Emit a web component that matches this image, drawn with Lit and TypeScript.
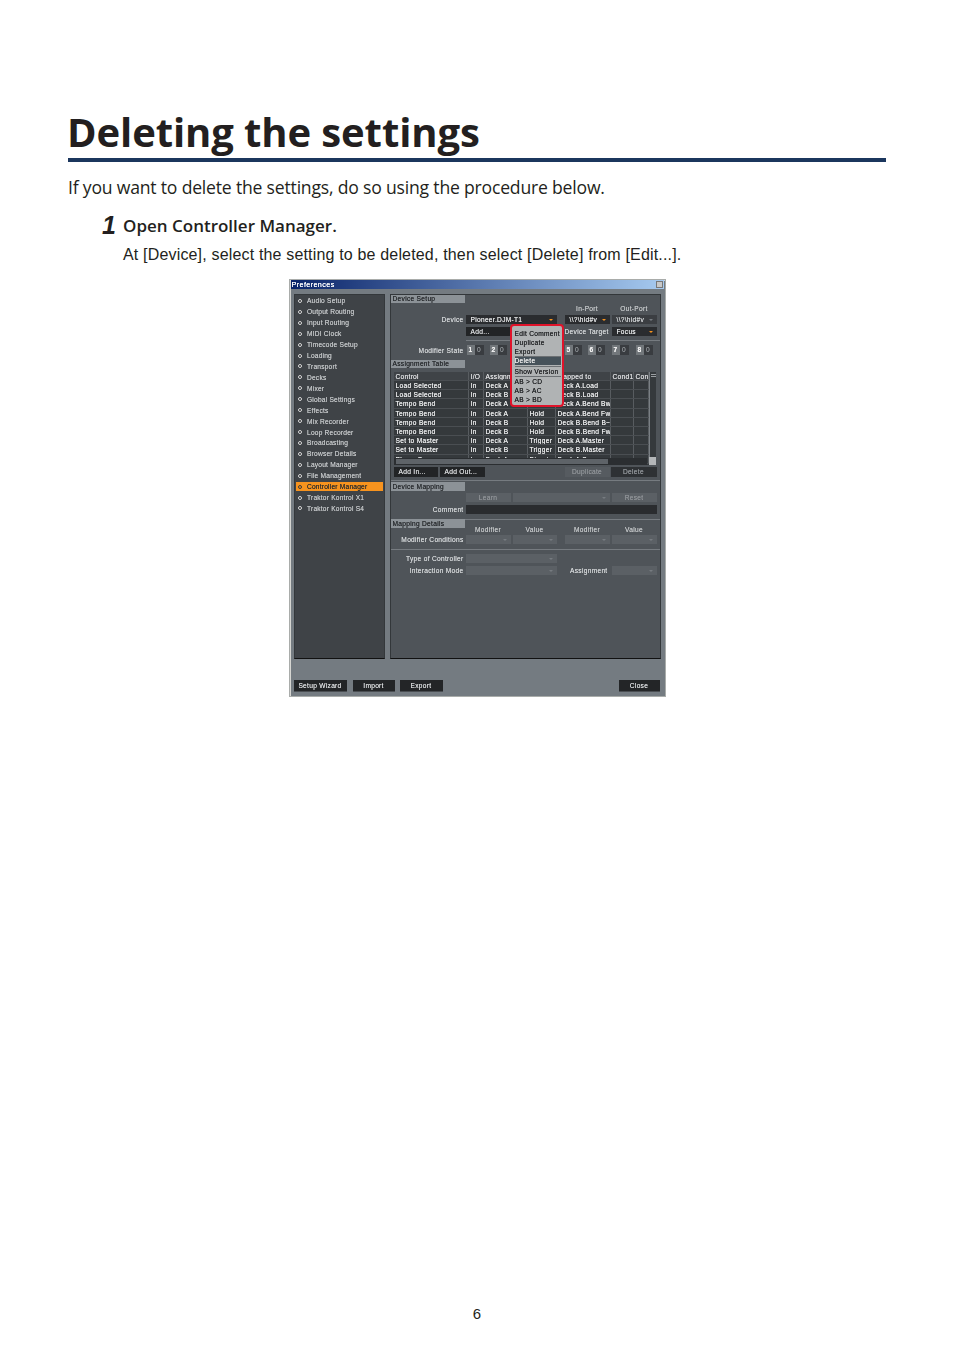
import { LitElement, html, css } from "lit";
import { customElement } from "lit/decorators.js";

const NAV = ["Audio Setup","Output Routing","Input Routing","MIDI Clock","Timecode Setup","Loading","Transport","Decks","Mixer","Global Settings","Effects","Mix Recorder","Loop Recorder","Broadcasting","Browser Details","Layout Manager","File Management","Controller Manager","Traktor Kontrol X1","Traktor Kontrol S4"];
const ROWS = [
  ["Load Selected","In","Deck A","Trigger","Deck A.Load"],
  ["Load Selected","In","Deck B","Trigger","Deck B.Load"],
  ["Tempo Bend","In","Deck A","Hold","Deck A.Bend Bwc"],
  ["Tempo Bend","In","Deck A","Hold","Deck A.Bend Fwc"],
  ["Tempo Bend","In","Deck B","Hold","Deck B.Bend B~"],
  ["Tempo Bend","In","Deck B","Hold","Deck B.Bend Fwc"],
  ["Set to Master","In","Deck A","Trigger","Deck A.Master"],
  ["Set to Master","In","Deck B","Trigger","Deck B.Master"],
  ["Phase Sync","In","Deck A","Direct","Deck A.Sync"],
];

@customElement("app-root")
export class AppRoot extends LitElement {
  static styles = css`
    :host { display: block; width: 954px; height: 1350px; background: #fff; font-family: "Open Sans", "Noto Sans", sans-serif; color: #231f20; overflow: hidden; position: relative; }
    .page { padding: 107px 68px 0; width: 818px; }
    h1 { margin: 0 0 0 -1px; font-size: 40px; line-height: 49px; font-weight: 700; height: 51px; letter-spacing: -0.1px; }
    .rule { height: 4px; background: #1b365d; }
    .intro { margin: 13px 0 0; font-size: 17.6px; line-height: 24px; letter-spacing: -0.2px; }
    .step { display: flex; margin: 13px 0 0 34px; height: 26px; align-items: center; }
    .num { font: italic 700 25px/26px "Liberation Sans", sans-serif; width: 21px; }
    .step b { font-size: 17px; font-weight: 600; }
    .desc { margin: 7px 0 0 55px; font: 16px/20px "Liberation Sans", sans-serif; letter-spacing: 0.17px; }
    .fig { display: flex; justify-content: center; margin: 14px 0 0 0; }
    .folio { position: absolute; left: 0; right: 0; top: 1305px; text-align: center; font: 15px/18px "Liberation Sans", sans-serif; }

    .win { width: 377px; height: 418px; box-sizing: border-box; border: 1px solid #a9acaa; box-shadow: inset 1px 1px 0 #d6d6d2; background: #747b81; position: relative; font: 6.6px/9px "Liberation Sans", sans-serif; letter-spacing: 0.3px; color: #d4d6d8; text-shadow: 0 0 0.6px currentColor; filter: blur(0.35px); display: flex; flex-direction: column; }
    .title { height: 9px; margin: 0 1px; background: linear-gradient(90deg, #0a246a, #a6caf0); color: #fff; font-size: 7.2px; letter-spacing: 0.4px; line-height: 9px; padding-left: 1px; display: flex; justify-content: space-between; }
    .x { width: 7px; height: 7px; background: #c8c8c8; margin: 1px 1px 0 0; border: 1px solid #777; box-sizing: border-box; }
    .main { display: flex; gap: 5px; margin: 5px 0 0 4px; }
    .nav { width: 91px; height: 365px; box-sizing: border-box; background: #3f4347; border: 1px solid #34383b; border-bottom-color: #111; padding-top: 0.5px; }
    .item { height: 10.93px; line-height: 9px; display: flex; align-items: center; gap: 5.5px; padding-left: 1px; margin-right: 1px; color: #bfc2c4; letter-spacing: 0.22px; }
    .item.on { background: #f7931e; color: #33302c; height: 9px; margin: 0.96px 1px 0.97px 1px; padding-left: 0; }
    .dot { width: 4px; height: 4px; box-sizing: border-box; border: 1px solid #dcdcdc; border-radius: 50%; margin-left: 2px; flex: none; background: #2c2f32; }
    .on .dot { border-color: #3a3a3a; background: #f7931e; }
    .panel { width: 271px; height: 365px; box-sizing: border-box; background: #4f5459; border: 1px solid #33373a; border-bottom-color: #111; position: relative; }
    .head { width: 74px; height: 8px; background: #8c9297; color: #2b2e31; line-height: 8px; padding-left: 2px; box-sizing: border-box; }
    .head.tall { height: 9px; line-height: 9px; }
    .r { display: grid; grid-template-columns: 75px 45px 2px 44px 8px 45px 2px 45px; align-items: center; }
    .lbl { text-align: right; padding-right: 2px; color: #cfd2d4; white-space: nowrap; }
    .c { height: 9px; line-height: 9px; background: #5b6065; box-sizing: border-box; padding-left: 5px; position: relative; white-space: nowrap; overflow: hidden; color: #b0b3b6; }
    .c.dark { background: #2a2c2f; color: #dfe1e2; }
    .c.mid { background: #3b3e42; color: #cfd2d4; }
    .c.ar::after { content: ""; position: absolute; right: 4px; top: 4px; border: 2px solid transparent; border-top: 2px solid #767b80; border-bottom: 0; }
    .c.dark.ar::after { border-top-color: #f7931e; }
    .a { grid-column: 2; } .b { grid-column: 4; } .d { grid-column: 6; } .e { grid-column: 8; }
    .ab { grid-column: 2 / 5; } .bd { grid-column: 4 / 7; } .all { grid-column: 2 / 9; }
    .hc { text-align: center; color: #bfc2c4; }
    .c.hc { padding-left: 0; color: #8e9296; }
    .sep { height: 1px; background: #767b80; }
    .sep.short { margin-left: 75px; }
    .m1 { margin-top: 1px; } .m2 { margin-top: 2px; } .m3 { margin-top: 3px; } .m4 { margin-top: 4px; } .m5 { margin-top: 5px; }
    .over { margin-top: -1px; } .lift { margin-top: -3px; }
    .mods { display: flex; grid-column: 2 / 9; }
    .modcell { width: 23px; height: 10px; line-height: 10px; display: flex; flex: none; padding-left: 1px; box-sizing: border-box; }
    .modcell.gap { width: 29px; }
    .modcell.short { width: 24px; }
    .modcell i { font-style: normal; width: 8px; background: #72777b; color: #f0f0f0; text-align: center; font-weight: 700; }
    .modcell span { width: 9px; background: #393c40; color: #8d9195; text-align: center; }

    .table { margin: 4px 0 0 3px; width: 262px; height: 93px; background: #35393c; position: relative; overflow: hidden; }
    .tr { display: grid; grid-template-columns: 75px 15px 44px 28px 55px 23px 15px; height: 9.2px; line-height: 9px; color: #e8e9ea; border-bottom: 1px solid #4a4e52; box-sizing: border-box; white-space: nowrap; width: 255px; }
    .tr.th { height: 9px; background: #3f4347; color: #dcdddf; }
    .tr > span { padding-left: 2px; border-right: 1px solid #585c60; overflow: hidden; }
    .vs { position: absolute; right: 0; top: 0; width: 7px; height: 85px; border-left: 1px solid #7a7f84; box-sizing: border-box; }
    .vs::before { content: ""; position: absolute; left: 1px; top: 2px; width: 5px; height: 1px; background: #9a9ea2; box-shadow: 0 2px 0 #9a9ea2; }
    .hs { position: absolute; left: 0; bottom: 0; height: 7px; width: 253px; background: #2b2e31; }
    .hs::before { content: ""; position: absolute; left: 2px; top: 1px; height: 5px; width: 212px; background: #5e6368; }
    .corner { position: absolute; right: 0; bottom: 0; width: 7px; height: 8px; background: #b3b6b8; }

    .btns { display: grid; grid-template-columns: 3px 44px 2px 45px 80px 45px 1px 46px; margin-top: 2px; }
    .btn { height: 10px; line-height: 10px; background: #222426; text-align: center; color: #d4d6d8; box-sizing: border-box; white-space: nowrap; }
    .btn.left { text-align: left; padding-left: 5px; }
    .btn.add { height: 9px; line-height: 9px; }
    .btn.off { background: #565b60; color: #8e9296; }
    .btn.offd { background: #2e3134; color: #8e9296; }
    .b1 { grid-column: 2; } .b2 { grid-column: 4; } .b3 { grid-column: 6; } .b4 { grid-column: 8; }

    .foot { display: flex; margin: 21px 5px 0 4px; }
    .foot .btn { height: 11.5px; line-height: 11px; background: #232527; border-bottom: 1px solid #4a4e52; }
    .foot .w1 { width: 53px; margin-right: 6px; } .foot .w2 { width: 42px; margin-right: 5px; } .foot .w3 { width: 43px; } .foot .w4 { width: 41px; margin-left: auto; }

    .menu { position: absolute; left: 119px; top: 29px; width: 54px; height: 83px; box-sizing: border-box; border: 2px solid #e0132a; border-radius: 4px; background: #b0b3b4; color: #26282a; padding: 2.5px 1px 0 3px; z-index: 2; line-height: 9px; white-space: nowrap; }
    .mi { height: 9px; }
    .mi.sel { background: #46525a; color: #e8e8e8; height: 8.5px; line-height: 8.5px; }
    .ms { height: 1px; background: #6c7073; }
    .ms.g { margin: 0.5px 0 0; }
  `;

  private combo(cls: string, text = "", tone = "") {
    return html`<div class="c ar ${cls} ${tone}">${text}</div>`;
  }

  private mod(n: number, cls = "") {
    return html`<div class="modcell ${cls}"><i>${n}</i><span>0</span></div>`;
  }

  render() {
    return html`
      <div class="page">
        <h1>Deleting the settings</h1>
        <div class="rule"></div>
        <p class="intro">If you want to delete the settings, do so using the procedure below.</p>
        <div class="step"><span class="num">1</span><b>Open Controller Manager.</b></div>
        <div class="desc">At [Device], select the setting to be deleted, then select [Delete] from [Edit...].</div>
        <div class="fig">
          <div class="win">
            <div class="title"><span>Preferences</span><span class="x"></span></div>
            <div class="main">
              <div class="nav">
                ${NAV.map((n) => html`<div class="item ${n === "Controller Manager" ? "on" : ""}"><span class="dot"></span>${n}</div>`)}
              </div>
              <div class="panel">
                <div class="head">Device Setup</div>
                <div class="r m1"><div class="hc d">In-Port</div><div class="hc e">Out-Port</div></div>
                <div class="r m2">
                  <div class="lbl">Device</div>
                  ${this.combo("ab", "Pioneer.DJM-T1", "dark")}
                  ${this.combo("d", "\\\\?\\hid#v", "dark")}
                  ${this.combo("e", "\\\\?\\hid#v", "mid")}
                </div>
                <div class="r m3">
                  <div class="btn add left a">Add...</div>
                  <div class="lbl d">Device Target</div>
                  ${this.combo("e", "Focus", "dark")}
                </div>
                <div class="sep short m4"></div>
                <div class="r m4">
                  <div class="lbl">Modifier State</div>
                  <div class="mods">
                    ${this.mod(1)}${this.mod(2)}${this.mod(3)}${this.mod(4, "gap")}${this.mod(5)}${this.mod(6, "short")}${this.mod(7, "short")}${this.mod(8)}
                  </div>
                </div>
                <div class="head m5">Assignment Table</div>
                <div class="table">
                  <div class="tr th"><span>Control</span><span>I/O</span><span>Assignment</span><span></span><span>Mapped to</span><span>Cond1</span><span>Cond2</span></div>
                  ${ROWS.map((r) => html`<div class="tr"><span>${r[0]}</span><span>${r[1]}</span><span>${r[2]}</span><span>${r[3]}</span><span>${r[4]}</span><span></span><span></span></div>`)}
                  <div class="vs"></div>
                  <div class="hs"></div>
                  <div class="corner"></div>
                </div>
                <div class="btns">
                  <div class="btn left b1">Add In...</div>
                  <div class="btn left b2">Add Out...</div>
                  <div class="btn off b3">Duplicate</div>
                  <div class="btn offd b4">Delete</div>
                </div>
                <div class="sep m3"></div>
                <div class="head tall m1">Device Mapping</div>
                <div class="r m2">
                  <div class="c hc a">Learn</div>
                  ${this.combo("bd")}
                  <div class="c hc e">Reset</div>
                </div>
                <div class="r m3">
                  <div class="lbl">Comment</div>
                  <div class="c dark all"></div>
                </div>
                <div class="sep m5"></div>
                <div class="head tall over">Mapping Details</div>
                <div class="r lift">
                  <div class="hc a">Modifier</div><div class="hc b">Value</div><div class="hc d">Modifier</div><div class="hc e">Value</div>
                </div>
                <div class="r m1">
                  <div class="lbl">Modifier Conditions</div>
                  ${this.combo("a")}${this.combo("b")}${this.combo("d")}${this.combo("e")}
                </div>
                <div class="sep m5"></div>
                <div class="r m4">
                  <div class="lbl">Type of Controller</div>
                  ${this.combo("ab")}
                </div>
                <div class="r m3">
                  <div class="lbl">Interaction Mode</div>
                  ${this.combo("ab")}
                  <div class="lbl d">Assignment</div>
                  ${this.combo("e")}
                </div>
                <div class="menu">
                  <div class="mi">Edit Comment</div>
                  <div class="mi">Duplicate</div>
                  <div class="mi">Export</div>
                  <div class="ms"></div>
                  <div class="mi sel">Delete</div>
                  <div class="ms g"></div>
                  <div class="mi">Show Version</div>
                  <div class="ms g"></div>
                  <div class="mi">AB &gt; CD</div>
                  <div class="mi">AB &gt; AC</div>
                  <div class="mi">AB &gt; BD</div>
                </div>
              </div>
            </div>
            <div class="foot">
              <div class="btn w1">Setup Wizard</div>
              <div class="btn w2">Import</div>
              <div class="btn w3">Export</div>
              <div class="btn w4">Close</div>
            </div>
          </div>
        </div>
      </div>
      <div class="folio">6</div>
    `;
  }
}
